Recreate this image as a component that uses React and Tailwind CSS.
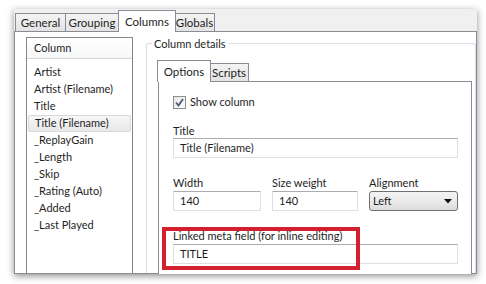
import React from "react";

const font = { fontFamily: "Lato, 'Noto Sans', sans-serif" };

const columns = [
  "Artist",
  "Artist (Filename)",
  "Title",
  "Title (Filename)",
  "_ReplayGain",
  "_Length",
  "_Skip",
  "_Rating (Auto)",
  "_Added",
  "_Last Played",
];

const Tab = ({ label, width, active }) =>
  active ? (
    <div
      className={`relative z-10 -mx-px ${width} h-[22px] -mb-px border border-b-0 border-[#898c95] bg-white flex items-center justify-center text-[11.5px] text-[#1e1e1e]`}
    >
      {label}
    </div>
  ) : (
    <div
      className={`${width} h-[18px] border border-b-0 border-[#898c95] bg-gradient-to-b from-[#f4f4f4] to-[#e3e3e3] flex items-center justify-center text-[11.5px] text-[#1e1e1e] -ml-px first:ml-0`}
    >
      {label}
    </div>
  );

const Field = ({ value, className = "" }) => (
  <div
    className={`h-[20px] border border-[#dcdfe3] border-t-[#abadb3] bg-white flex items-center pl-[6px] text-[11px] text-[#1e1e1e] ${className}`}
  >
    {value}
  </div>
);

export default function App() {
  return (
    <div className="relative w-[486px] h-[284px] bg-white overflow-hidden pt-[9px] pl-[14px]" style={font}>
      <div className="w-[463px] h-[265px] bg-[#f0f0f0] shadow-[0_2px_7px_rgba(0,0,0,0.45)] flex flex-col overflow-hidden">
        {/* outer tabs */}
        <div className="h-[22px] flex items-end pl-px">
          <Tab label="General" width="w-[51px]" />
          <Tab label="Grouping" width="w-[54px]" />
          <Tab label="Columns" width="w-[58px]" active />
          <Tab label="Globals" width="w-[41px]" />
        </div>

        {/* panel */}
        <div className="flex-1 border border-[#898c95] bg-white flex min-h-0">
          {/* column list */}
          <div className="ml-[11px] mt-[5px] w-[108px] border border-b-0 border-[#828790] bg-white flex flex-col">
            <div className="h-[21px] border-b border-[#d5d5d5] bg-gradient-to-b from-white to-[#f6f7f8] flex items-center pl-[7px] text-[11px] text-[#1e1e1e]">
              Column
            </div>
            <div className="pt-[5px] px-px">
              {columns.map((c) => (
                <div
                  key={c}
                  className={`h-[17px] flex items-center pl-[6px] text-[11px] text-[#1e1e1e] rounded-[2px] ${
                    c === "Title (Filename)"
                      ? "border border-[#d9d9d9] bg-gradient-to-b from-[#f7f7f7] to-[#e8e8e8] pl-[5px]"
                      : ""
                  }`}
                >
                  {c}
                </div>
              ))}
            </div>
          </div>

          {/* column details group */}
          <div className="relative ml-[13px] mt-[11px] flex-1 border border-b-0 border-[#d5dfe5] rounded-t-[3px] pl-[11px] pr-[3px] pt-[18px]">
            <div className="absolute left-[5px] -top-[8px] bg-white px-[2px] text-[11px] leading-[15px] text-[#1e1e1e]">
              Column details
            </div>

            {/* inner tabs */}
            <div className="h-[19px] flex items-end">
              <Tab label="Options" width="w-[54px]" active />
              <Tab label="Scripts" width="w-[40px]" />
            </div>
            <div className="border border-b-0 border-[#898c95] bg-white h-[200px] pl-[14px] pr-[13px]">
              <div className="mt-[14px] flex items-center gap-[4px] h-[13px]">
                <div className="w-[13px] h-[13px] border border-[#8e8f8f] bg-gradient-to-br from-[#e8e8e8] to-[#fbfbfb] flex items-center justify-center">
                  <svg width="11" height="11" viewBox="0 0 11 11">
                    <path d="M2 5.5 L4.5 8.5 L9 2" fill="none" stroke="#4d5a73" strokeWidth="1.8" />
                  </svg>
                </div>
                <span className="text-[11px] text-[#1e1e1e]">Show column</span>
              </div>

              <div className="mt-[15px] h-[14px] leading-[14px] text-[11px] text-[#1e1e1e]">Title</div>
              <Field value="Title (Filename)" />

              <div className="mt-[18px] flex gap-[11px]">
                <div className="w-[88px]">
                  <div className="h-[14px] leading-[14px] text-[11px] text-[#1e1e1e]">Width</div>
                  <Field value="140" className="mt-px" />
                </div>
                <div className="w-[86px]">
                  <div className="h-[14px] leading-[14px] text-[11px] text-[#1e1e1e]">Size weight</div>
                  <Field value="140" className="mt-px" />
                </div>
                <div className="w-[89px]">
                  <div className="h-[14px] leading-[14px] text-[11px] text-[#1e1e1e]">Alignment</div>
                  <div className="mt-px h-[20px] rounded-[3px] border border-[#707070] bg-gradient-to-b from-[#f3f3f3] via-[#ebebeb] to-[#dcdcdc] flex items-center justify-between pl-[3px] pr-[5px] text-[11px] text-[#1e1e1e]">
                    <span>Left</span>
                    <svg width="8" height="5" viewBox="0 0 8 5">
                      <path d="M0 0 H8 L4 4.5 Z" fill="#111" />
                    </svg>
                  </div>
                </div>
              </div>

              <div className="mt-[18px] h-[14px] leading-[14px] text-[11px] text-[#1e1e1e]">
                Linked meta field (for inline editing)
              </div>
              <Field value="TITLE" className="mt-px" />
            </div>
          </div>
        </div>
      </div>

      {/* highlight annotation */}
      <div className="absolute left-[162px] top-[227px] w-[198px] h-[43px] border-[4px] border-[#d4202e]" />
    </div>
  );
}
